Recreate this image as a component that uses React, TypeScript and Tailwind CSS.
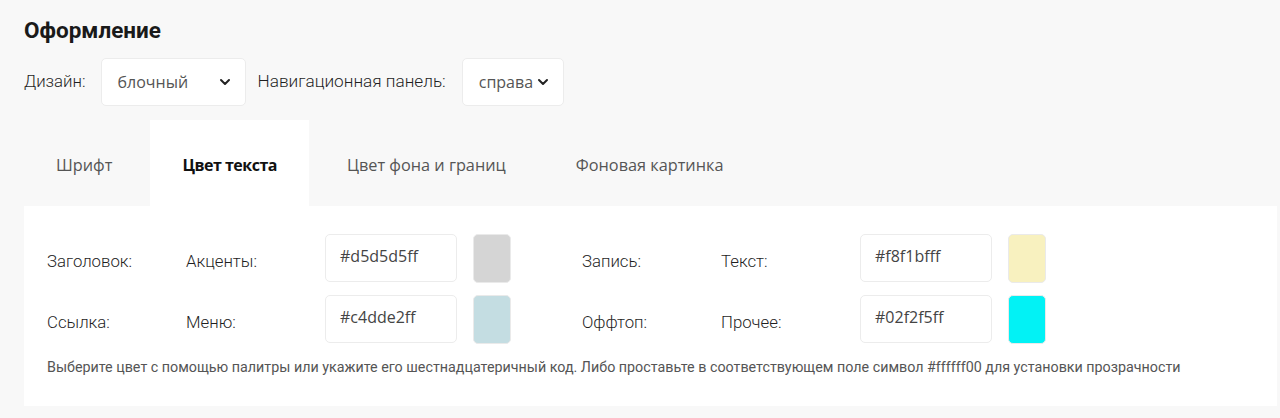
import { ChevronDown } from "lucide-react";

const ui = { fontFamily: '"Open Sans", "Noto Sans", sans-serif' };
const pt = { fontFamily: 'Roboto, "Noto Sans", sans-serif' };

type Row = { a: string; b: string; hex: string; swatch: string };

const LEFT: Row[] = [
  { a: "Заголовок:", b: "Акценты:", hex: "#d5d5d5ff", swatch: "bg-[#d5d5d5]" },
  { a: "Ссылка:", b: "Меню:", hex: "#c4dde2ff", swatch: "bg-[#c4dde2]" },
];
const RIGHT: Row[] = [
  { a: "Запись:", b: "Текст:", hex: "#f8f1bfff", swatch: "bg-[#f8f1bf]" },
  { a: "Оффтоп:", b: "Прочее:", hex: "#02f2f5ff", swatch: "bg-[#02f2f5]" },
];

const TABS = ["Шрифт", "Цвет текста", "Цвет фона и границ", "Фоновая картинка"];

function Select({ value, width }: { value: string; width: string }) {
  return (
    <div
      className={`flex h-12 items-center rounded-[5px] border border-[#ececec] bg-white pl-4 pr-3 text-[16px] font-normal text-[#555] ${width}`}
      style={ui}
    >
      <span>{value}</span>
      <ChevronDown className="ml-auto h-4 w-4 text-[#222]" strokeWidth={3} />
    </div>
  );
}

function ColorRow({ row }: { row: Row }) {
  return (
    <div className="flex h-12 items-center text-[16.8px] font-light text-[#1f1f1f]" style={pt}>
      <div className="w-[139px] pt-2">{row.a}</div>
      <div className="w-[139px] pt-2">{row.b}</div>
      <div
        className="flex h-12 w-[132px] items-center rounded-[5px] border border-[#ececec] px-[14px] pb-1 text-[16px] font-normal text-[#444]"
        style={ui}
      >
        {row.hex}
      </div>
      <div className={`ml-4 h-[49px] w-[38px] rounded-[5px] border border-[#eaeaea] ${row.swatch}`} />
    </div>
  );
}

export default function App() {
  return (
    <div className="h-[418px] overflow-hidden bg-[#f8f8f8] pl-6 pt-[15px]">
      <h1 className="text-[22.5px] font-bold leading-[30px] text-[#1a1a1a]" style={pt}>
        Оформление
      </h1>
      <div className="mt-[13px] flex items-center text-[16.8px] font-light text-[#1f1f1f]" style={pt}>
        <span className="mr-[15px]">Дизайн:</span>
        <Select value="блочный" width="w-[145px]" />
        <span className="ml-3 mr-[16px] text-[17.2px]">Навигационная панель:</span>
        <Select value="справа" width="w-[102px]" />
      </div>
      <div className="mt-[14px] flex h-[86px] items-center" style={ui}>
        {TABS.map((t, i) => (
          <div
            key={t}
            className={`mr-[6px] flex h-full items-center px-8 pt-1 ${
              i === 1 ? "bg-white text-[16px] font-bold tracking-[-0.5px] text-[#111]" : "text-[16.3px] text-[#555]"
            }`}
          >
            {t}
          </div>
        ))}
      </div>
      <div className="w-[1253px] bg-white pl-[23px] pt-7 pb-[29px]">
        <div className="flex">
          <div className="flex w-[535px] flex-col gap-[13px]">
            {LEFT.map((r) => (
              <ColorRow key={r.a} row={r} />
            ))}
          </div>
          <div className="flex flex-col gap-[13px]">
            {RIGHT.map((r) => (
              <ColorRow key={r.a} row={r} />
            ))}
          </div>
        </div>
        <p className="mt-[14px] text-[14.3px] leading-5 text-[#555]" style={pt}>
          Выберите цвет с помощью палитры или укажите его шестнадцатеричный код. Либо проставьте в соответствующем поле символ
          #ffffff00 для установки прозрачности
        </p>
      </div>
    </div>
  );
}
